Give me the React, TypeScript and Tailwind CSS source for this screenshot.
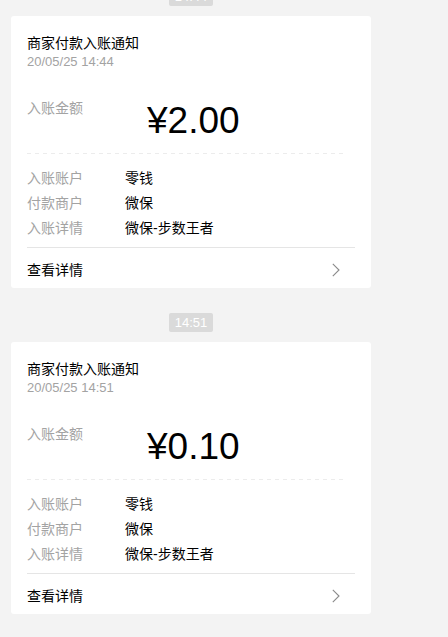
import React from "react";

const font = { fontFamily: '"Liberation Sans", "Noto Sans CJK SC", sans-serif' };

function Pill({ t }: { t: string }) {
  return (
    <div className="flex justify-center w-[382px]">
      <div className="h-[19px] w-[44px] rounded-[2px] bg-[#dadada] text-white text-[13px] leading-[19px] text-center">
        {t}
      </div>
    </div>
  );
}

function Card({ date, amount }: { date: string; amount: string }) {
  const rows: [string, string][] = [
    ["入账账户", "零钱"],
    ["付款商户", "微保"],
    ["入账详情", "微保-步数王者"],
  ];
  return (
    <div className="ml-[11px] w-[360px] bg-white rounded-[3px] px-[16px] pt-[17px] pb-[8px]">
      <div className="text-[14px] leading-[20px] text-black">商家付款入账通知</div>
      <div className="text-[13px] leading-[18px] text-[#a3a3a3]">{date}</div>
      <div className="flex items-start mt-[27px]">
        <div className="w-[120px] text-[14px] leading-[20px] text-[#a3a3a3]">入账金额</div>
        <div className="mt-[4px] text-[37px] leading-[37px] text-black">{amount}</div>
      </div>
      <div className="mt-[14px] h-px w-[320px] bg-[repeating-linear-gradient(to_right,#ececec_0,#ececec_4px,transparent_4px,transparent_8px)]" />
      <div className="mt-[12px]">
        {rows.map(([k, v]) => (
          <div key={k} className="flex text-[14px] leading-[25px]">
            <div className="w-[98px] text-[#a3a3a3]">{k}</div>
            <div className="text-black">{v}</div>
          </div>
        ))}
      </div>
      <div className="mt-[6px] h-px bg-[#e5e5e5]" />
      <div className="mt-[12px] flex items-center justify-between pr-[15px]">
        <div className="text-[14px] leading-[20px] text-black">查看详情</div>
        <svg width="8" height="14" viewBox="0 0 8 14" fill="none">
          <path d="M0.8 0.8 L7 7 L0.8 13.2" stroke="#8a8a8a" strokeWidth="1.1" />
        </svg>
      </div>
    </div>
  );
}

export default function App() {
  return (
    <div className="min-h-[637px] w-[448px] bg-[#f3f3f3] overflow-hidden" style={font}>
      <div className="-mt-[13px]">
        <Pill t="14:44" />
        <div className="mt-[10px]">
          <Card date="20/05/25 14:44" amount="¥2.00" />
        </div>
        <div className="mt-[25px]">
          <Pill t="14:51" />
        </div>
        <div className="mt-[10px]">
          <Card date="20/05/25 14:51" amount="¥0.10" />
        </div>
      </div>
    </div>
  );
}
